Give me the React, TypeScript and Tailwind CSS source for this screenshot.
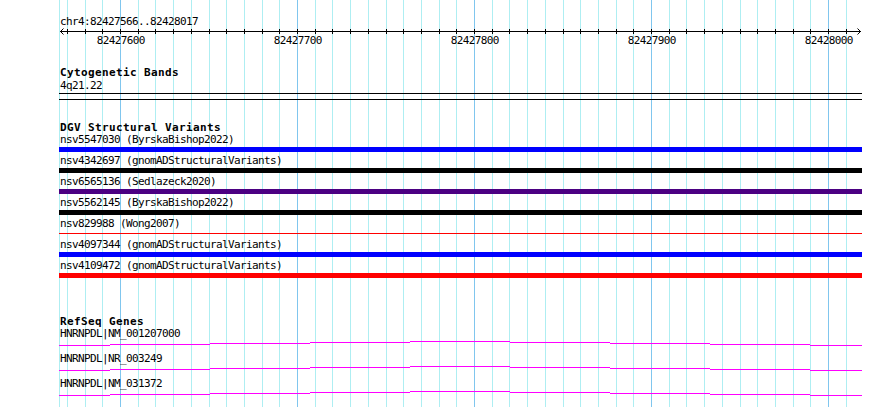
import React from 'react'

const bpToX = (bp: number) => Math.round(120 + (bp - 82427600) * 1.77)

const ticks = Array.from({ length: 45 }, (_, i) => 82427570 + i * 10)
const labels = [82427600, 82427700, 82427800, 82427900, 82428000]

const variants = [
  { name: 'nsv5547030 (ByrskaBishop2022)', color: 'bg-[#0000ff]' },
  { name: 'nsv4342697 (gnomADStructuralVariants)', color: 'bg-black' },
  { name: 'nsv6565136 (Sedlazeck2020)', color: 'bg-[#4b0082]' },
  { name: 'nsv5562145 (ByrskaBishop2022)', color: 'bg-black' },
  { name: 'nsv829988 (Wong2007)', color: 'bg-[#ff0000]', thin: true },
  { name: 'nsv4097344 (gnomADStructuralVariants)', color: 'bg-[#0000ff]' },
  { name: 'nsv4109472 (gnomADStructuralVariants)', color: 'bg-[#ff0000]' },
]

const genes = ['HNRNPDL|NM_001207000', 'HNRNPDL|NR_003249', 'HNRNPDL|NM_031372']

// step pattern of the gene line (x range, vertical offset)
const geneSteps = [
  [59, 110, 4],
  [110, 210, 3],
  [210, 310, 2],
  [310, 410, 1],
  [410, 510, 0],
  [510, 610, 1],
  [610, 710, 2],
  [710, 810, 3],
  [810, 862, 4],
]

function GridLines() {
  return (
    <svg className="absolute inset-0" width={890} height={407}>
      <rect x={59} y={0} width={1} height={407} fill="#aeeef2" />
      {ticks.map(bp => (
        <rect
          key={bp}
          x={bpToX(bp)}
          y={0}
          width={1}
          height={407}
          fill={bp % 100 === 0 ? '#80c6ee' : '#aeeef2'}
        />
      ))}
    </svg>
  )
}

function Ruler() {
  return (
    <svg width={890} height={18} className="block">
      <rect x={60} y={3} width={801} height={1} fill="#000" />
      {ticks.map(bp => (
        <rect key={bp} x={bpToX(bp)} y={1} width={1} height={5} fill="#000" />
      ))}
      <polyline points="63.5,0.5 60.5,3.5 63.5,6.5" fill="none" stroke="#000" strokeWidth={1} />
      <polyline points="857.5,0.5 860.5,3.5 857.5,6.5" fill="none" stroke="#000" strokeWidth={1} />
      {labels.map(bp => (
        <text
          key={bp}
          x={bpToX(bp) + 0.8}
          y={16}
          textAnchor="middle"
          fontFamily="'DejaVu Sans Mono', monospace"
          fontSize={11}
          letterSpacing={-0.62}
          fill="#000"
        >
          {bp}
        </text>
      ))}
    </svg>
  )
}

function GeneLine() {
  return (
    <svg width={890} height={5} className="block mt-px">
      {geneSteps.map(([x0, x1, dy]) => (
        <rect key={x0} x={x0} y={dy} width={x1 - x0} height={1} fill="#ff00ff" />
      ))}
    </svg>
  )
}

export default function App() {
  return (
    <div className="relative w-[890px] h-[407px] bg-white overflow-hidden font-['DejaVu_Sans_Mono',monospace] text-[11px] text-black">
      <GridLines />

      <div className="relative">
        {/* Ruler */}
        <div className="pt-[16px]">
          <div className="h-[12px] leading-[12px] pl-[60px] tracking-[-0.62px]">chr4:82427566..82428017</div>
          <Ruler />
        </div>

        {/* Cytogenetic Bands */}
        <div className="mt-[21px]">
          <div className="h-[12px] leading-[12px] pl-[60px] font-bold tracking-[0.38px]">Cytogenetic Bands</div>
          <div className="mt-px h-[12px] leading-[12px] pl-[60px] tracking-[-0.62px]">4q21.22</div>
          <div className="mt-px ml-[59px] w-[803px] h-px bg-black"></div>
          <div className="mt-[5px] ml-[59px] w-[803px] h-px bg-black"></div>
        </div>

        {/* DGV Structural Variants */}
        <div className="mt-[22px]">
          <div className="h-[12px] leading-[12px] pl-[60px] font-bold tracking-[0.38px]">DGV Structural Variants</div>
          {variants.map(v => (
            <div key={v.name} className="pb-[3px]">
              <div className="h-[12px] leading-[12px] pl-[60px] tracking-[-0.62px] whitespace-pre">{v.name}</div>
              <div className="mt-px ml-[59px] w-[803px] h-[5px] flex items-center">
                <div className={`w-full ${v.thin ? 'h-px' : 'h-[5px]'} ${v.color}`}></div>
              </div>
            </div>
          ))}
        </div>

        {/* RefSeq Genes */}
        <div className="mt-[35px]">
          <div className="h-[12px] leading-[12px] pl-[60px] font-bold tracking-[0.38px]">RefSeq Genes</div>
          {genes.map(g => (
            <div key={g} className="pb-[7px]">
              <div className="h-[12px] leading-[12px] pl-[60px] tracking-[-0.62px]">{g}</div>
              <GeneLine />
            </div>
          ))}
        </div>
      </div>
    </div>
  )
}
